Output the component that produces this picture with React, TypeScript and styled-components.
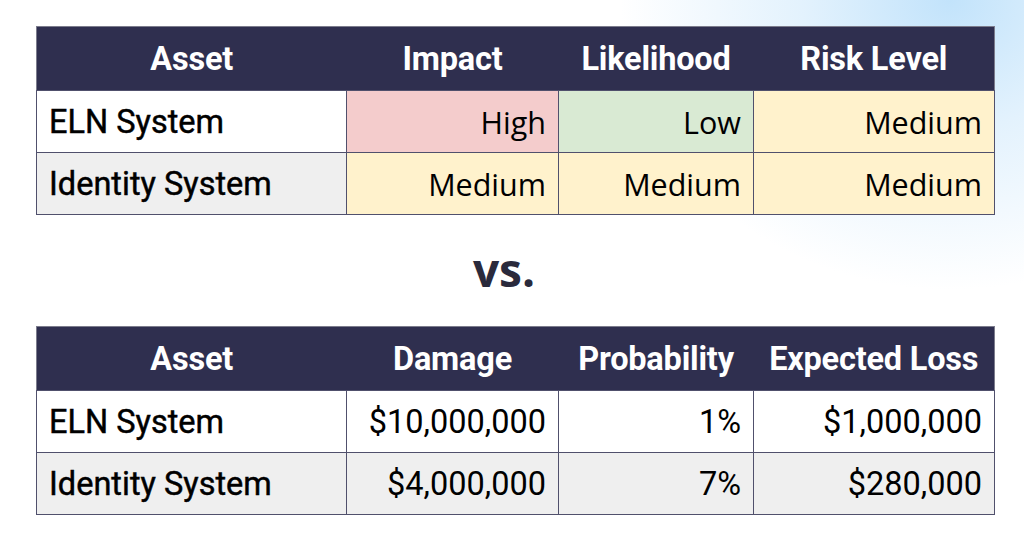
import styled, { createGlobalStyle } from 'styled-components';

const GlobalStyle = createGlobalStyle`
  html, body {
    margin: 0;
    padding: 0;
  }
  body {
    width: 1024px;
    height: 547px;
    overflow: hidden;
    background:
      radial-gradient(ellipse 330px 290px at 950px 0px, #c2e3fb 0%, rgba(212, 235, 252, 0.65) 45%, rgba(255, 255, 255, 0) 100%),
      #ffffff;
    font-family: Roboto, "Liberation Sans", sans-serif;
  }
`;

const Page = styled.main`
  display: flex;
  flex-direction: column;
  align-items: flex-start;
  padding: 26px 0 0 36px;
`;

const Table = styled.table`
  width: 958px;
  table-layout: fixed;
  border-collapse: collapse;
  border: 1.5px solid #7c7c8c;
`;

const HeadCell = styled.th`
  height: 63px;
  padding: 0 4px;
  background: #2f2f4f;
  color: #ffffff;
  font-family: Roboto, "Liberation Sans", sans-serif;
  font-weight: 700;
  font-size: 32.5px;
  letter-spacing: -0.2px;
  text-align: center;
  white-space: nowrap;
`;

type Tone = 'white' | 'grey' | 'pink' | 'green' | 'yellow';

const tones: Record<Tone, string> = {
  white: '#ffffff',
  grey: '#efefef',
  pink: '#f4cccc',
  green: '#d9ead3',
  yellow: '#fff2cc',
};

const Cell = styled.td<{ $tone: Tone; $label?: boolean; $rating?: boolean }>`
  height: 61px;
  padding: ${(p) => (p.$label ? '0 0 0 12px' : '0 12px 0 0')};
  background: ${(p) => tones[p.$tone]};
  border: 1px solid #50506c;
  color: #000000;
  font-family: ${(p) =>
    p.$rating ? '"Open Sans", "Noto Sans", sans-serif' : 'Roboto, "Liberation Sans", sans-serif'};
  font-size: ${(p) => (p.$rating ? '30.5px' : '32.5px')};
  -webkit-text-stroke: ${(p) => (p.$label ? '0.45px #000' : '0')};
  text-align: ${(p) => (p.$label ? 'left' : 'right')};
  white-space: nowrap;
`;

const Versus = styled.div`
  width: 958px;
  height: 111px;
  display: flex;
  align-items: center;
  justify-content: center;
  padding: 0 22px 4px 0;
  box-sizing: border-box;
  color: #2a2a3c;
  font-family: "Open Sans", "Noto Sans", sans-serif;
  font-weight: 700;
  font-size: 46px;
`;

const widths = [310, 212, 195, 241];

const Cols = () => (
  <colgroup>
    {widths.map((w) => (
      <col key={w} style={{ width: w }} />
    ))}
  </colgroup>
);

const tone = (v: string): Tone => (v === 'High' ? 'pink' : v === 'Low' ? 'green' : 'yellow');

const riskRows = [
  { asset: 'ELN System', base: 'white' as Tone, vals: ['High', 'Low', 'Medium'] },
  { asset: 'Identity System', base: 'grey' as Tone, vals: ['Medium', 'Medium', 'Medium'] },
];

const lossRows = [
  { asset: 'ELN System', base: 'white' as Tone, vals: ['$10,000,000', '1%', '$1,000,000'] },
  { asset: 'Identity System', base: 'grey' as Tone, vals: ['$4,000,000', '7%', '$280,000'] },
];

export default function App() {
  return (
    <>
      <GlobalStyle />
      <Page>
        <Table>
          <Cols />
          <thead>
            <tr>
              {['Asset', 'Impact', 'Likelihood', 'Risk Level'].map((h) => (
                <HeadCell key={h}>{h}</HeadCell>
              ))}
            </tr>
          </thead>
          <tbody>
            {riskRows.map((r) => (
              <tr key={r.asset}>
                <Cell $tone={r.base} $label>
                  {r.asset}
                </Cell>
                {r.vals.map((v, i) => (
                  <Cell key={i} $tone={tone(v)} $rating>
                    {v}
                  </Cell>
                ))}
              </tr>
            ))}
          </tbody>
        </Table>
        <Versus>vs.</Versus>
        <Table>
          <Cols />
          <thead>
            <tr>
              {['Asset', 'Damage', 'Probability', 'Expected Loss'].map((h) => (
                <HeadCell key={h}>{h}</HeadCell>
              ))}
            </tr>
          </thead>
          <tbody>
            {lossRows.map((r) => (
              <tr key={r.asset}>
                <Cell $tone={r.base} $label>
                  {r.asset}
                </Cell>
                {r.vals.map((v, i) => (
                  <Cell key={i} $tone={r.base}>
                    {v}
                  </Cell>
                ))}
              </tr>
            ))}
          </tbody>
        </Table>
      </Page>
    </>
  );
}
